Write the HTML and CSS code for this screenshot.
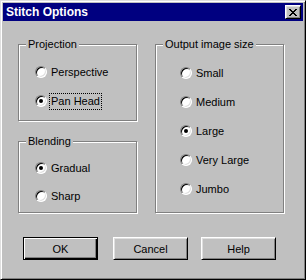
FILE: index.html
```html
<!DOCTYPE html>
<html lang="en">
<head>
  <meta charset="UTF-8">
  <title>Stitch Options</title>
  <link rel="stylesheet" href="styles.css">
</head>
<body>

<!-- Dialog window -->
<div class="window">
  <div class="titlebar">
    <span class="title">Stitch Options</span>
    <button class="close" type="button">
      <svg width="8" height="7" viewBox="0 0 8 7" shape-rendering="crispEdges">
        <path fill="#000" d="M0 0h2v1H0zM6 0h2v1H6zM1 1h2v1H1zM5 1h2v1H5zM2 2h4v1H2zM3 3h2v1H3zM2 4h4v1H2zM1 5h2v1H1zM5 5h2v1H5zM0 6h2v1H0zM6 6h2v1H6z"/>
      </svg>
    </button>
  </div>

  <div class="body">
    <div class="groups">
      <!-- Left column -->
      <div class="column left">
        <fieldset class="group projection">
          <legend>Projection</legend>
          <div class="options">
            <label class="option"><span class="radio"></span><span class="text">Perspective</span></label>
            <label class="option"><span class="radio checked"></span><span class="text focused">Pan Head</span></label>
          </div>
        </fieldset>

        <fieldset class="group blending">
          <legend>Blending</legend>
          <div class="options">
            <label class="option"><span class="radio checked"></span><span class="text">Gradual</span></label>
            <label class="option"><span class="radio"></span><span class="text">Sharp</span></label>
          </div>
        </fieldset>
      </div>

      <!-- Right column -->
      <div class="column right">
        <fieldset class="group output">
          <legend>Output image size</legend>
          <div class="options">
            <label class="option"><span class="radio"></span><span class="text">Small</span></label>
            <label class="option"><span class="radio"></span><span class="text">Medium</span></label>
            <label class="option"><span class="radio checked"></span><span class="text">Large</span></label>
            <label class="option"><span class="radio"></span><span class="text">Very Large</span></label>
            <label class="option"><span class="radio"></span><span class="text">Jumbo</span></label>
          </div>
        </fieldset>
      </div>
    </div>

    <!-- Buttons -->
    <div class="buttons">
      <button class="btn default" type="button">OK</button>
      <button class="btn cancel" type="button">Cancel</button>
      <button class="btn help" type="button">Help</button>
    </div>
  </div>
</div>

</body>
</html>
```

FILE: styles.css
```css
body {
  margin: 0;
  background-color: #c0c0c0;
  font-family: "Liberation Sans", Arial, sans-serif;
  font-size: 11px;
  color: #000;
}

/* Window frame */
.window {
  width: 306px;
  height: 280px;
  box-sizing: border-box;
  background-color: #c0c0c0;
  border: 1px solid;
  border-color: #dfdfdf #000 #000 #dfdfdf;
  box-shadow: inset 1px 1px #fff, inset -1px -1px #808080;
  padding: 2px;
}

/* Title bar */
.titlebar {
  height: 18px;
  background-color: #000080;
  color: #fff;
  display: flex;
  align-items: center;
  justify-content: space-between;
  padding: 0 2px 0 3px;
}

.title {
  font-weight: bold;
  font-size: 12px;
  line-height: 14px;
}

.close {
  width: 16px;
  height: 14px;
  box-sizing: border-box;
  padding: 0;
  margin: 0;
  background-color: #c0c0c0;
  border: 1px solid;
  border-color: #fff #000 #000 #fff;
  box-shadow: inset 1px 1px #dfdfdf, inset -1px -1px #808080;
  display: flex;
  align-items: center;
  justify-content: center;
}

.close svg {
  display: block;
  margin-left: -1px;
}

/* Dialog body */
.body {
  padding: 17px 0 0 15px;
}

.groups {
  display: flex;
  gap: 18px;
}

.column {
  display: flex;
  flex-direction: column;
}

/* Group boxes */
.group {
  margin: 0;
  min-width: 0;
  padding: 0 7px;
  border: 1px solid #808080;
  box-shadow: inset 1px 1px #fff, 1px 1px #fff;
}

.group legend {
  padding: 0 2px;
  line-height: 13px;
  background-color: #c0c0c0;
}

.projection {
  width: 119px;
  box-sizing: border-box;
  padding-bottom: 11px;
}

.projection .options {
  padding-top: 13px;
}

.blending {
  width: 119px;
  box-sizing: border-box;
  margin-top: 14px;
  padding-bottom: 8px;
}

.blending .options {
  padding-top: 12px;
  gap: 12px;
}

.output {
  width: 129px;
  box-sizing: border-box;
  padding-bottom: 15px;
}

.output .options {
  padding-top: 14px;
  padding-left: 17px;
}

/* Radio options */
.options {
  display: flex;
  flex-direction: column;
  gap: 13px;
  padding-left: 9px;
}

.option {
  display: flex;
  align-items: center;
  height: 16px;
}

.radio {
  width: 12px;
  height: 12px;
  box-sizing: border-box;
  border-radius: 50%;
  border: 1px solid;
  border-color: #808080 #fff #fff #808080;
  box-shadow: inset 1px 1px #000, inset -1px -1px #dfdfdf;
  background-color: #fff;
  display: flex;
  align-items: center;
  justify-content: center;
  flex-shrink: 0;
}

.radio.checked::after {
  content: "";
  width: 4px;
  height: 4px;
  border-radius: 50%;
  background-color: #000;
}

.text {
  margin-left: 3px;
  padding: 1px 1px;
  line-height: 13px;
}

.text.focused {
  outline: 1px dotted #000;
  outline-offset: 0;
}

/* Push buttons */
.buttons {
  display: flex;
  margin-top: 24px;
  padding-left: 5px;
}

.btn {
  width: 75px;
  height: 23px;
  box-sizing: border-box;
  margin: 0;
  padding: 0;
  font-family: "Liberation Sans", Arial, sans-serif;
  font-size: 11px;
  color: #000;
  background-color: #c0c0c0;
  border: 1px solid;
  border-color: #fff #000 #000 #fff;
  box-shadow: inset 1px 1px #dfdfdf, inset -1px -1px #808080;
}

.btn.default {
  border-color: #000;
  box-shadow: inset 1px 1px #fff, inset -1px -1px #000, inset -2px -2px #808080;
}

.cancel {
  margin-left: 15px;
}

.help {
  margin-left: 13px;
}
```
